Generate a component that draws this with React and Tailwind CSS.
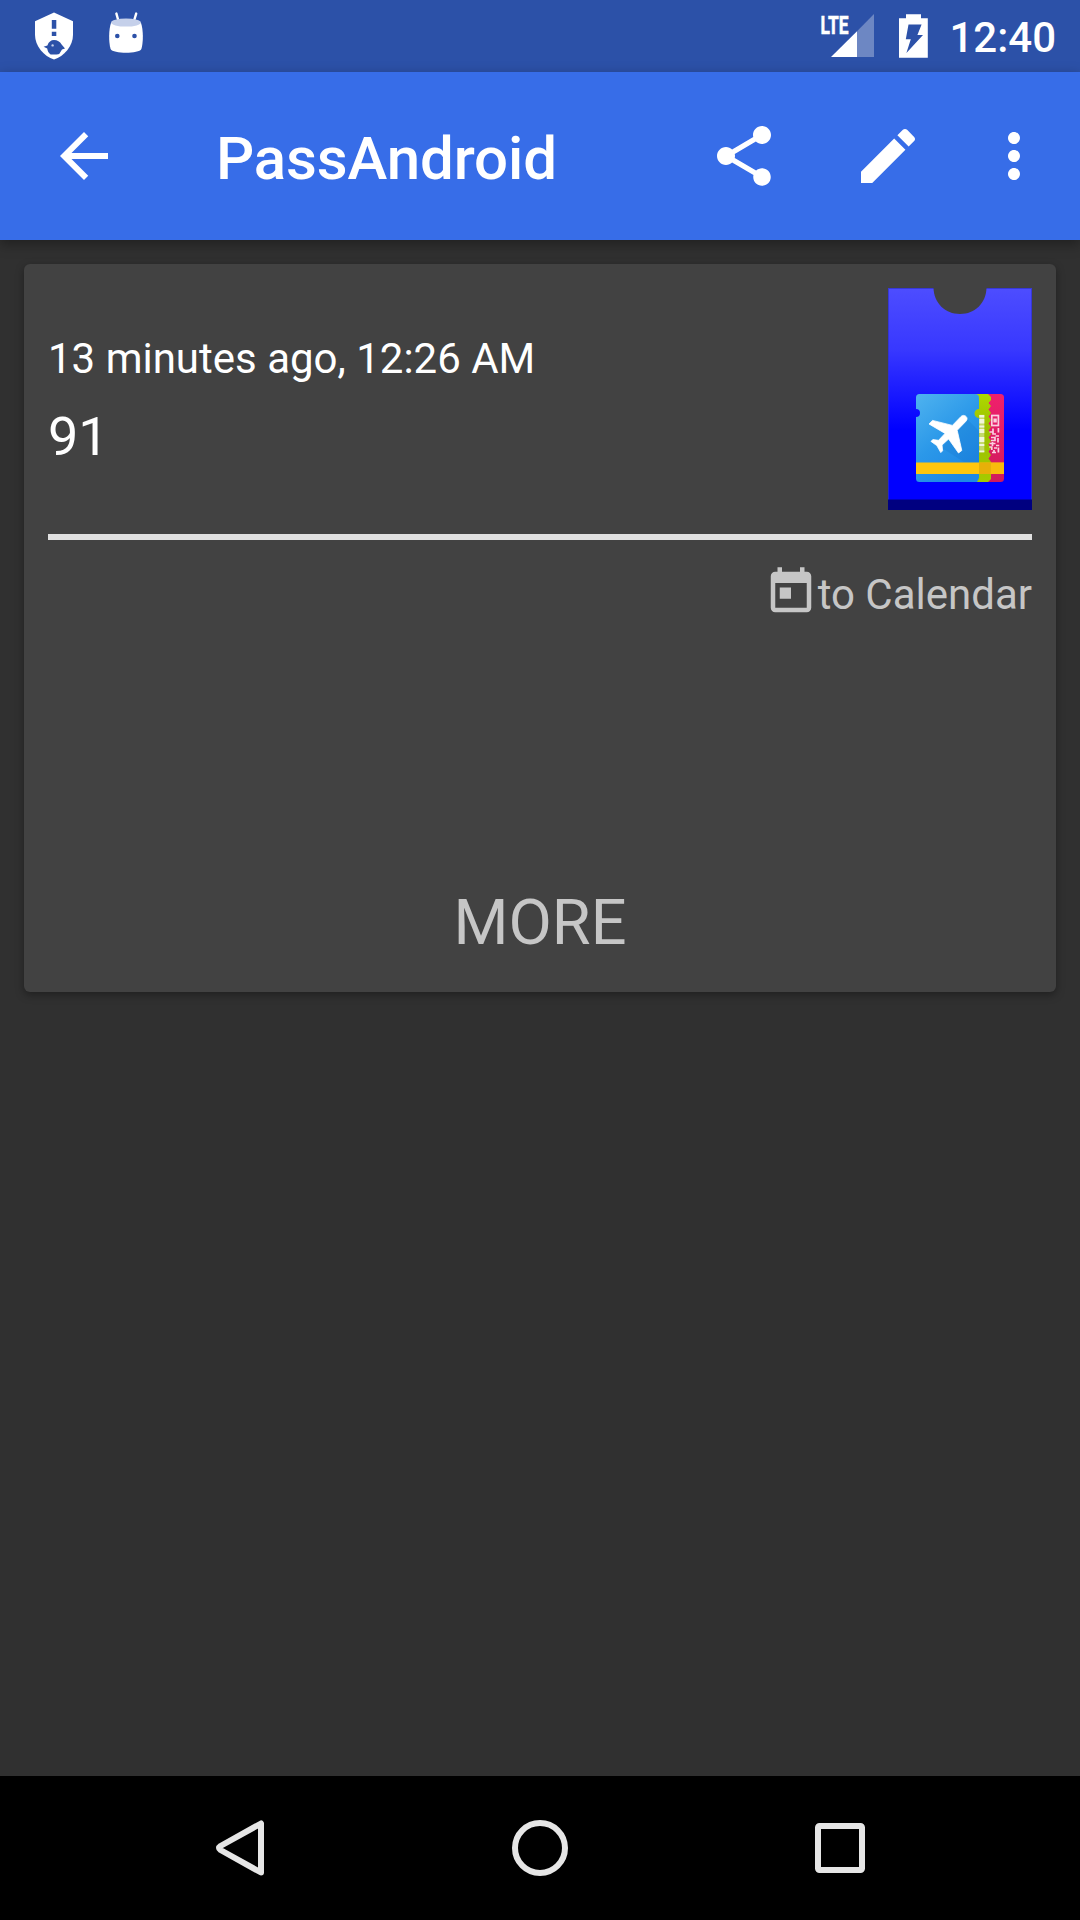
function StatusBar() {
  return (
    <header className="flex h-[72px] items-center bg-[#2c51a8] text-white">
      <svg className="ml-[33px] h-[72px] w-[42px]" viewBox="33 0 42 72">
        <path d="M54 12.5 L73 21.3 V35 C73 46 64 56.5 54 59.6 C44 56.5 35 46 35 35 V21.3 Z" fill="#fff" />
        <path d="M51.8 20h4.5v8.8h-4.5zM51.8 31.7h4.5v4.2h-4.5z" fill="#2c51a8" />
        <path d="M43.6 46.8 L47.4 45.4 C48.6 42 51 40 54 40 C57.400 40 60 41.600 61.600 44.600 L65 48.600 L62 49.400 L59.200 54 C57 54.600 53.500 54.800 50.600 54.400 C48.600 53 47.600 51 47.200 48.400 Z" fill="#2c51a8" />
        <circle cx="52.6" cy="45.4" r="1.2" fill="#c5d0ea" />
      </svg>
      <svg className="ml-[31px] h-[72px] w-[40px]" viewBox="106 0 40 72">
        <path d="M116.4 13.6 L118.6 21.5 M136.2 13.6 L133.8 21.5" stroke="#fff" strokeWidth="2.4" strokeLinecap="round" />
        <path d="M111 23 C108.6 30 108.600 42 110.600 49 C113 54 139 54 141.400 49 C143.400 42 143.400 30 141 23 Z" fill="#fff" />
        <ellipse cx="126" cy="22.6" rx="15" ry="4" fill="#c5d0ea" />
        <circle cx="117.3" cy="36" r="2.3" fill="#2c51a8" />
        <circle cx="134.5" cy="36" r="2.3" fill="#2c51a8" />
      </svg>
      <svg className="ml-auto h-[72px] w-[58px]" viewBox="819 0 58 72">
        <text x="820.5" y="33.5" fontFamily="Roboto" fontWeight="700" fontSize="26.5" textLength="28" lengthAdjust="spacingAndGlyphs" fill="#fff" stroke="#fff" strokeWidth="0.6">LTE</text>
        <path d="M857 31.2 V57 H874 V14 Z" fill="#6d87c3" />
        <path d="M831 57 H857 V31.2 Z" fill="#fff" />
      </svg>
      <svg className="ml-[20px] h-[72px] w-[33px]" viewBox="897 0 33 72">
        <path d="M906 14.2 h15 v4 h6.8 v39.5 H899 V18.2 h7 Z" fill="#fff" />
        <path d="M908.5 24.6 H921.6 L917.4 35 H923 L906.4 53 L910.8 39.2 H905.8 Z" fill="#2c51a8" />
      </svg>
      <span className="ml-[19px] mr-[24px] pt-[3px] text-[42px] leading-[48px] font-medium">12:40</span>
    </header>
  );
}

function ActionIcon({ d, className }) {
  return (
    <svg viewBox="0 0 24 24" className={className} fill="currentColor">
      <path d={d} />
    </svg>
  );
}

function AppBar() {
  return (
    <nav className="relative z-10 flex h-[168px] items-center bg-[#376de8] pr-[30px] pl-[48px] text-white shadow-[0_4px_12px_rgba(0,0,0,0.35)]">
      <ActionIcon className="size-[72px]" d="M20 11H7.83l5.59-5.59L12 4l-8 8 8 8 1.41-1.41L7.83 13H20v-2z" />
      <h1 className="ml-[96px] pt-[5px] text-[60px] leading-[72px] font-medium tracking-[-0.12px]">PassAndroid</h1>
      <ActionIcon
        className="ml-auto size-[72px]"
        d="M18 16.08c-.76 0-1.44.3-1.96.77L8.91 12.7c.05-.23.09-.46.09-.7s-.04-.47-.09-.7l7.05-4.11c.54.5 1.25.81 2.04.81 1.66 0 3-1.34 3-3s-1.34-3-3-3-3 1.34-3 3c0 .24.04.47.09.7L8.04 9.81C7.5 9.31 6.79 9 6 9c-1.66 0-3 1.34-3 3s1.34 3 3 3c.79 0 1.5-.31 2.04-.81l7.12 4.16c-.05.21-.08.43-.08.65 0 1.61 1.31 2.92 2.92 2.92s2.92-1.31 2.92-2.92-1.31-2.92-2.92-2.92z"
      />
      <ActionIcon
        className="ml-[72px] size-[72px]"
        d="M3 17.25V21h3.75L17.81 9.94l-3.75-3.75L3 17.25zM20.71 7.04c.39-.39.39-1.02 0-1.41l-2.34-2.34c-.39-.39-1.02-.39-1.41 0l-1.83 1.83 3.75 3.75 1.83-1.83z"
      />
      <ActionIcon
        className="ml-[54px] size-[72px]"
        d="M12 8c1.1 0 2-.9 2-2s-.9-2-2-2-2 .9-2 2 .9 2 2 2zm0 2c-1.1 0-2 .9-2 2s.9 2 2 2 2-.9 2-2-.9-2-2-2zm0 6c-1.1 0-2 .9-2 2s.9 2 2 2 2-.9 2-2-.9-2-2-2z"
      />
    </nav>
  );
}

function PassIcon() {
  return (
    <svg className="h-[222px] w-[144px]" viewBox="0 0 144 222">
      <defs>
        <linearGradient id="pocket" x1="0" y1="0" x2="0" y2="1">
          <stop offset="0" stopColor="#4d4dff" />
          <stop offset="0.29" stopColor="#3838ff" />
          <stop offset="0.43" stopColor="#2323ff" />
          <stop offset="0.67" stopColor="#0000ff" />
          <stop offset="1" stopColor="#0000ff" />
        </linearGradient>
        <linearGradient id="sky" x1="0" y1="0" x2="0.6" y2="1">
          <stop offset="0" stopColor="#4fb3ef" />
          <stop offset="0.55" stopColor="#2b98e9" />
          <stop offset="1" stopColor="#1e88e5" />
        </linearGradient>
        <linearGradient id="rose" x1="0" y1="0" x2="0" y2="1">
          <stop offset="0" stopColor="#f0206c" />
          <stop offset="1" stopColor="#cf1a5c" />
        </linearGradient>
        <linearGradient id="lime" x1="0" y1="0" x2="0" y2="1">
          <stop offset="0" stopColor="#aed900" />
          <stop offset="0.4" stopColor="#9bbf00" />
          <stop offset="1" stopColor="#a4cb00" />
        </linearGradient>
      </defs>
      <rect width="144" height="212" fill="url(#pocket)" />
      <path d="M0 0V212M144 0V212M0 0H144" stroke="#3030c8" strokeWidth="2" opacity="0.7" />
      <rect y="211.5" width="144" height="10.5" fill="#000080" />
      <path d="M45.5 0 C46 15 57 26 72 26 C87 26 98 15 98.5 0 Z" fill="#424242" />

      <rect x="90" y="106" width="26" height="88" rx="3.5" fill="url(#rose)" />
      <path d="M84 106 H100 L103 109 L103 112 L100.5 115 L103 118 L100.5 121.5 L103 125 L100.5 128.5 L103 132 L100.5 135.5 L103 139 L100.5 142.5 L103 146 L100.5 149.5 L103 153 L100.5 156.5 L103 160 L100.5 163.5 L103 167 L100.5 170.5 L103 174 V191 L100 194 H84 Z" fill="url(#lime)" />
      <path d="M31.5 106 H87 Q91 106 91 110 V121 A4.5 4.5 0 0 0 91 130 V190 L89 194 H31.5 Q28 194 28 190.5 V129 A4 4 0 0 0 28 121 V109.5 Q28 106 31.5 106 Z" fill="url(#sky)" />
      <path d="M77 129 L91 143 V174 H76 L54 160 Z" fill="#0f66b8" opacity="0.16" />
      <rect x="28" y="174.5" width="88" height="11.5" fill="#ffc60d" />
      <rect x="91" y="174.5" width="12" height="11.5" fill="#dfa808" opacity="0.75" />
      <rect x="103" y="174.5" width="13" height="11.5" fill="#f3b30d" opacity="0.6" />

      <path d="M73 128.5 C75 126.4 78.5 127.5 79 130.2 C79.2 131.5 78.6 132.6 77.8 133.4 L69.2 142.3 L73.8 162.5 L70.5 165 L60.6 151 L54 157 L54.6 162.8 L52.8 164.6 L48.8 157.6 L43 153.4 L44.8 151.6 L50.6 152.3 L57 145.4 L41 136 L44.5 132.4 L64.4 137.4 Z" fill="#fff" stroke="#fff" strokeWidth="0.8" strokeLinejoin="round" />

      <rect x="91.3" y="126.8" width="5" height="37.5" fill="#c3d96a" />
      <g fill="#f1f6dc">
        <rect x="91.3" y="127" width="5" height="2.5" />
        <rect x="91.3" y="131" width="5" height="4.5" />
        <rect x="91.3" y="137.5" width="5" height="2" />
        <rect x="91.3" y="141" width="5" height="4" />
        <rect x="91.3" y="149" width="5" height="5" />
        <rect x="91.3" y="156" width="5" height="2" />
        <rect x="91.3" y="162.5" width="5" height="1.8" />
      </g>
      <g fill="none" stroke="#fad0df" strokeWidth="1.7">
        <rect x="103.8" y="127.5" width="6.6" height="10" />
        <path d="M105.4 132.5 h3.4" strokeWidth="4" />
        <path d="M105 140.500 V146 H108 M110.400 140 V144.500 M101.500 144 h4 M107.500 148 H111 M103 149.500 h4 v3 h-4 M110 150 v4.500 M101.500 155.500 h6 M104.500 154 v4 M108 157.500 h3.200 M101.300 159 h2.500 v3 M106 160 h3 M110.400 159.500 v5 M104 164.500 h4 M106 162 v2.500" />
      </g>
    </svg>
  );
}

function PassCard() {
  return (
    <main className="mx-[24px] mt-[24px] flex h-[728px] flex-col rounded-[6px] bg-[#424242] p-[24px] shadow-[0_3px_8px_rgba(0,0,0,0.35)]">
      <section className="flex h-[222px] items-center justify-between">
        <div className="pt-[4px] text-white">
          <p className="text-[42px] leading-[50px]">13 minutes ago, 12:26 AM</p>
          <p className="mt-[21px] text-[54px] leading-[64px]">91</p>
        </div>
        <PassIcon />
      </section>
      <div className="mt-[24px] h-[6px] bg-[#e0e0e0]" />
      <button className="mt-[25px] flex items-start justify-end text-[#c6c6c6]">
        <ActionIcon
          className="size-[54px]"
          d="M19 3h-1V1h-2v2H8V1H6v2H5c-1.11 0-1.99.9-1.99 2L3 19c0 1.1.89 2 2 2h14c1.1 0 2-.9 2-2V5c0-1.1-.9-2-2-2zm0 16H5V8h14v11zM7 10h5v5H7z"
        />
        <span className="mt-[5px] text-[42px] leading-[50px]">to Calendar</span>
      </button>
      <button className="mt-auto mb-[8px] text-center text-[63px] leading-[74px] text-[#c6c6c6]">MORE</button>
    </main>
  );
}

function NavigationBar() {
  return (
    <footer className="mt-auto flex h-[144px] items-center justify-center gap-[240px] bg-black">
      <svg className="size-[60px]" viewBox="210 1818 60 60" fill="none" stroke="#e6e6e6" strokeWidth="6" strokeLinejoin="round">
        <path d="M261 1823.5 V1872.5 L220.5 1850 Q217.5 1848 220.5 1846 Z" />
      </svg>
      <svg className="size-[60px]" viewBox="0 0 60 60" fill="none" stroke="#e6e6e6" strokeWidth="6">
        <circle cx="30" cy="30" r="25" />
      </svg>
      <svg className="size-[60px]" viewBox="0 0 60 60" fill="none" stroke="#e6e6e6" strokeWidth="6" strokeLinejoin="round">
        <rect x="8" y="8" width="44" height="44" rx="1.5" />
      </svg>
    </footer>
  );
}

export default function App() {
  return (
    <div className="flex h-[1920px] w-[1080px] flex-col overflow-hidden bg-[#303030] font-[Roboto,sans-serif]">
      <StatusBar />
      <AppBar />
      <PassCard />
      <NavigationBar />
    </div>
  );
}
